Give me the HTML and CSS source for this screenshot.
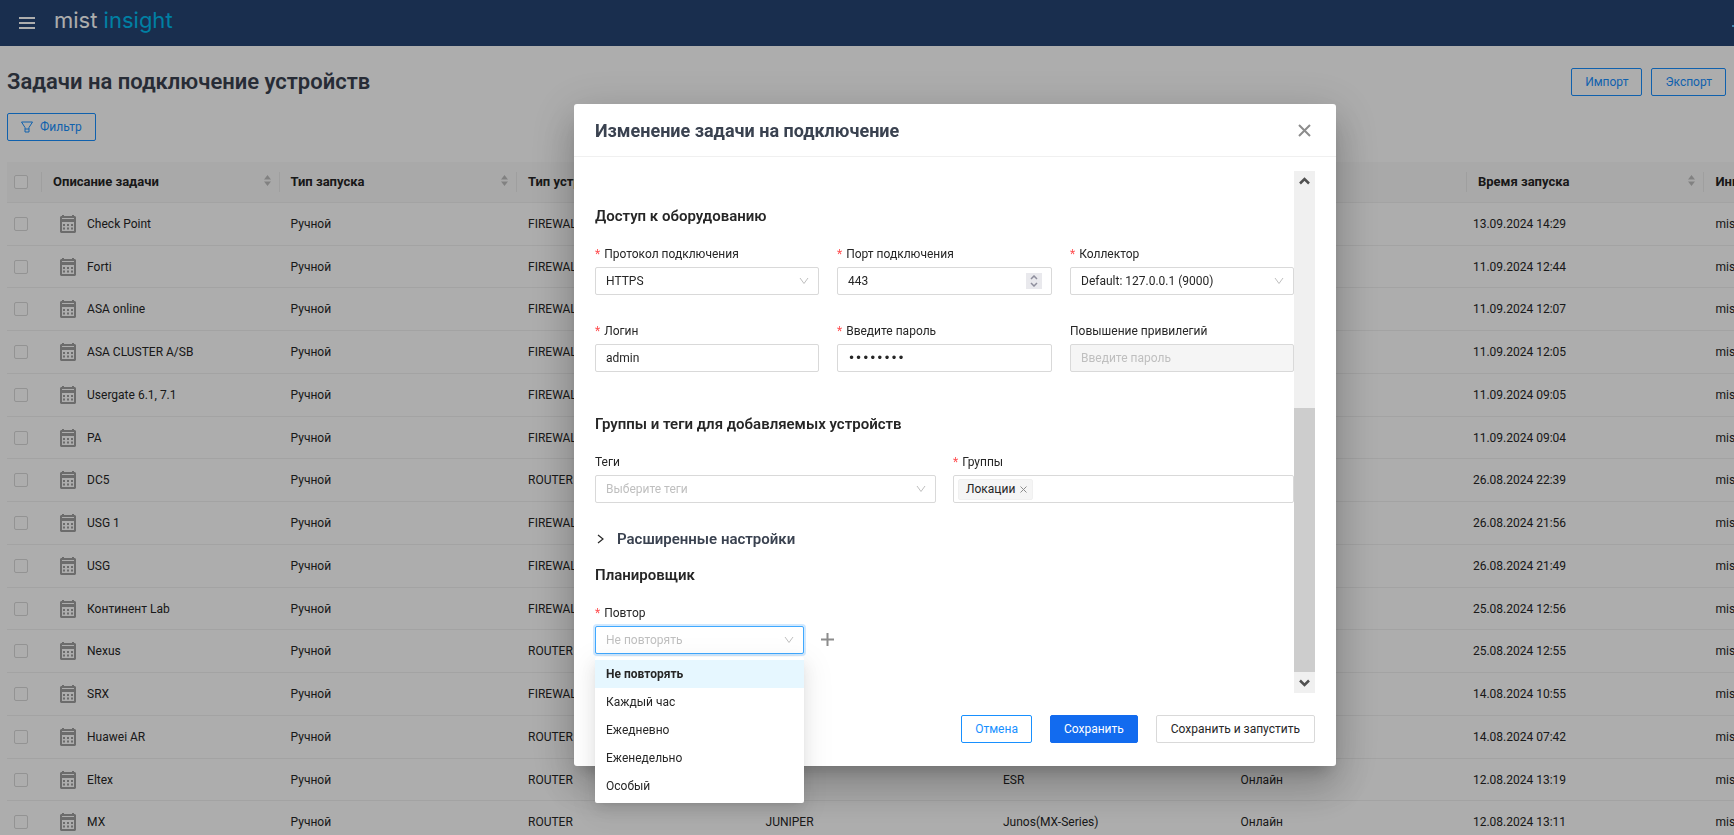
FILE: index.html
```html
<!DOCTYPE html>
<html lang="ru">
<head>
<meta charset="utf-8">
<title>Задачи на подключение устройств</title>
<link rel="stylesheet" href="styles.css">
</head>
<body>
<svg class="sprite" aria-hidden="true">
  <symbol id="calendar" viewBox="0 0 16 18">
    <path fill="currentColor" fill-rule="evenodd" d="M2 0h2v1h8V0h2v1h1l1 1v15l-1 1H1l-1-1V2l1-1h1zM2 3v1h12V3zM2 7v9h12V7z"/>
    <path fill="currentColor" d="M3 9h2v2H3zM7 9h2v2H7zM11 9h2v2h-2zM3 12.500h2v2H3zM7 12.500h2v2H7zM11 12.500h2v2h-2z"/>
  </symbol>
  <symbol id="chevron" viewBox="0 0 10 8"><path d="M1 1l4 5.500L9 1" fill="none" stroke="currentColor"/></symbol>
</svg>

<header class="topbar">
  <button class="burger" aria-label="Меню"><svg width="18" height="12"><path d="M1 1h16M1 6h16M1 11h16" stroke="#fff" stroke-width="2"/></svg></button>
  <a class="logo" href="#">mist <span>insight</span></a>
  <span class="topbar-mark"></span>
</header>

<main class="page">
  <div class="page-head">
    <h1>Задачи на подключение устройств</h1>
    <button class="btn btn-outline">Импорт</button>
    <button class="btn btn-outline">Экспорт</button>
  </div>
  <button class="btn btn-outline filter"><svg width="12" height="12" viewBox="0 0 12 12"><path d="M.5 1h11L8 6.500v4.500H4V6.500zM4 8h4" fill="none" stroke="currentColor"/></svg>Фильтр</button>
  <div class="table-wrap">
    <table>
      <colgroup><col class="c-check"><col class="c-main"><col class="c-main"><col class="c-main"><col class="c-main"><col class="c-main"><col class="c-main"><col class="c-main"><col class="c-main"></colgroup>
      <thead><tr>
        <th><input type="checkbox" aria-label="Выбрать все"></th>
        <th>Описание задачи</th><th>Тип запуска</th><th>Тип устройства</th><th></th><th></th><th></th><th>Время запуска</th><th>Инициатор</th>
      </tr></thead>
      <tbody id="rows"></tbody>
    </table>
  </div>
</main>

<div class="mask">
  <form class="modal" role="dialog" aria-labelledby="dlg-title">
    <div class="modal-head">
      <h2 id="dlg-title">Изменение задачи на подключение</h2>
      <button type="button" class="close" aria-label="Закрыть"><svg width="13" height="13"><path d="M1 1l11 11M12 1L1 12" stroke="currentColor" stroke-width="2"/></svg></button>
    </div>
    <div class="modal-body">
      <div class="content">
        <h3>Доступ к оборудованию</h3>
        <div class="grid three">
          <div class="field"><label class="req" for="proto">Протокол подключения</label>
            <div class="control"><select id="proto"><option>HTTPS</option></select><svg class="arrow"><use href="#chevron"/></svg></div></div>
          <div class="field"><label class="req" for="port">Порт подключения</label>
            <div class="control"><input id="port" type="text" inputmode="numeric" value="443"><span class="spinner"><svg width="8" height="12"><path d="M1 4l3-3 3 3M1 8l3 3 3-3" fill="none" stroke="#8f8f9d" stroke-width="1.500"/></svg></span></div></div>
          <div class="field"><label class="req" for="coll">Коллектор</label>
            <div class="control"><select id="coll"><option>Default: 127.0.0.1 (9000)</option></select><svg class="arrow"><use href="#chevron"/></svg></div></div>
          <div class="field"><label class="req" for="login">Логин</label>
            <div class="control"><input id="login" type="text" value="admin"></div></div>
          <div class="field"><label class="req" for="pass">Введите пароль</label>
            <div class="control"><input id="pass" class="secret" type="password" value="password"></div></div>
          <div class="field"><label for="priv">Повышение привилегий</label>
            <div class="control"><input id="priv" type="password" placeholder="Введите пароль" disabled></div></div>
        </div>
        <h3 class="groups-title">Группы и теги для добавляемых устройств</h3>
        <div class="grid two">
          <div class="field"><label for="tags">Теги</label>
            <div class="control"><select id="tags" class="muted"><option>Выберите теги</option></select><svg class="arrow"><use href="#chevron"/></svg></div></div>
          <div class="field"><label class="req" for="groups">Группы</label>
            <div class="control tagbox"><span class="tag">Локации<button type="button" aria-label="Удалить"><svg width="7" height="7"><path d="M.5.5l6 6M6.500.5l-6 6" stroke="currentColor"/></svg></button></span><input id="groups" type="text"></div></div>
        </div>
        <button type="button" class="expander"><svg width="7" height="10"><path d="M1 1l5 4-5 4" fill="none" stroke="#262626" stroke-width="1.200"/></svg>Расширенные настройки</button>
        <h3 class="plan-title">Планировщик</h3>
        <div class="repeat-row">
          <div class="field repeat"><label class="req" for="repeat">Повтор</label>
            <div class="control"><select id="repeat" class="muted focused"><option>Не повторять</option></select><svg class="arrow"><use href="#chevron"/></svg>
              <ul class="menu" role="listbox"><li class="active" role="option">Не повторять</li><li role="option">Каждый час</li><li role="option">Ежедневно</li><li role="option">Еженедельно</li><li role="option">Особый</li></ul>
            </div></div>
          <button type="button" class="add" aria-label="Добавить"><svg width="13" height="13"><path d="M0 6.500h13M6.500 0v13" stroke="currentColor" stroke-width="2"/></svg></button>
        </div>
      </div>
      <div class="scrollbar" aria-hidden="true">
        <svg class="sb-btn" viewBox="0 0 21 21"><path d="M6 12.500L10.500 8l4.500 4.500" fill="none" stroke="#505050" stroke-width="2.500"/></svg>
        <div class="track"><div class="thumb"></div></div>
        <svg class="sb-btn" viewBox="0 0 21 21"><path d="M6 8.500l4.500 4.500L15 8.500" fill="none" stroke="#505050" stroke-width="2.500"/></svg>
      </div>
    </div>
    <div class="modal-foot">
      <button type="button" class="btn btn-outline">Отмена</button>
      <button type="button" class="btn btn-primary">Сохранить</button>
      <button type="button" class="btn">Сохранить и запустить</button>
    </div>
  </form>
</div>
<script src="rows.js"></script>
</body>
</html>
```

FILE: styles.css
```css
* { box-sizing: border-box; }
html, body { height: 100%; }
body { margin: 0; overflow: hidden; background: #fff; font: 12px/20px Roboto, "Noto Sans", sans-serif; color: #262626; }
button, input, select { font: inherit; color: inherit; }
button { padding: 0; border: 0; background: none; cursor: pointer; }
h1, h2, h3 { margin: 0; font-weight: 700; }
.sprite { display: none; }

.topbar { display: flex; align-items: center; height: 46px; padding-left: 18px; background: #264474; }
.burger { display: flex; margin-right: 18px; }
.logo { padding-bottom: 6px; font: 22px/28px Inter, sans-serif; color: #fff; text-decoration: none; }
.logo span { color: #00bdf0; }
.topbar-mark { width: 2px; height: 2px; margin: 6px 0 0 auto; background: #5fc3ff; }

.page { padding: 21px 0 0 7px; }
.page-head { display: flex; align-items: center; gap: 9px; padding-right: 8px; }
h1 { flex: 1; padding-top: 1px; font-size: 22px; line-height: 28px; font-weight: 600; color: #3a4250; }
.btn { height: 28px; padding: 0 14px; border: 1px solid #d9d9d9; border-radius: 2px; background: #fff; white-space: nowrap; }
.btn-outline, .btn-primary { padding: 0 13px; }
.btn-outline { border-color: #1890ff; color: #1890ff; }
.btn-primary { border-color: #126bef; background: #126bef; color: #fff; }
.filter { display: flex; align-items: center; gap: 7px; margin-top: 17px; padding: 0 13px; }

.table-wrap { margin-top: 21px; overflow: hidden; }
table { width: 1935px; table-layout: fixed; border-collapse: separate; border-spacing: 0; }
.c-check { width: 35px; }
.c-main { width: 237px; }
th, td { padding: 0 11px; border-bottom: 1px solid #f0f0f0; text-align: left; white-space: nowrap; }
th { height: 41px; background: #fafafa; font-size: 13px; font-weight: 700; }
td { height: 43px; }
tr:nth-child(4n+2) td { height: 42px; }
th:first-child, td:first-child { padding: 0 7px; }
td:nth-child(2) { padding-left: 18px; }
td:nth-child(8) { padding-left: 6px; }
.th-in { display: flex; align-items: center; justify-content: space-between; }
.th-in::before { content: ""; width: 1px; height: 20px; margin: 0 11px 0 -12px; background: #ebebeb; }
.th-in span { flex: 1; }
.sort { margin: 0 -2px 4px 0; }
.name { display: flex; align-items: center; gap: 11px; }
.cal { width: 16px; height: 18px; color: #a0a0a0; }
input[type=checkbox] { display: block; appearance: none; width: 14px; height: 14px; margin: 0; border: 1px solid #d9d9d9; border-radius: 2px; background: #fff; }

.mask { position: fixed; inset: 0; display: flex; align-items: flex-start; justify-content: center; padding: 104px 0 0 176px; background: rgba(0, 0, 0, .32); }
.modal { width: 762px; border-radius: 3px; background: #fff; box-shadow: 0 11px 15px -7px rgba(0,0,0,.2), 0 24px 38px 3px rgba(0,0,0,.14), 0 9px 46px 8px rgba(0,0,0,.12); }
.modal-head { display: flex; align-items: center; justify-content: space-between; height: 53px; padding: 0 25px 0 21px; border-bottom: 1px solid #f0f0f0; }
h2 { padding-top: 1px; font-size: 18px; line-height: 24px; color: #3a4250; }
.close, .add { display: flex; color: #8c8c8c; }
.modal-body { display: flex; height: 522px; margin: 14px 21px 0; }
.content { flex: 1; padding-top: 34px; }
h3 { font-size: 15px; line-height: 22px; font-weight: 600; }
.grid { display: grid; column-gap: 18px; row-gap: 25px; margin-top: 16px; }
.three { grid-template-columns: 224fr 215fr 224fr; }
.two { grid-template-columns: 1fr 1fr; column-gap: 17px; }
.field { display: flex; flex-direction: column; min-width: 0; }
label { height: 24px; line-height: 22px; }
.req::before { content: "*"; margin-right: 4px; color: #ff4d4f; }
.control { position: relative; display: flex; height: 28px; }
.control > select, .control > input { width: 100%; padding: 0 10px; border: 1px solid #d9d9d9; border-radius: 2px; outline: 0; background: #fff; appearance: none; }
.control > input:disabled { background: #f5f5f5; }
.control > .secret { font-family: "DejaVu Sans", sans-serif; }
.control > .muted, input::placeholder { color: #bfbfbf; }
.control > .focused { border-color: #40a9ff; box-shadow: 0 0 0 2px rgba(24, 144, 255, .2); }
.arrow { position: absolute; right: 10px; top: 10px; width: 10px; height: 8px; color: #bfbfbf; pointer-events: none; }
.spinner { position: absolute; right: 10px; top: 6px; display: flex; align-items: center; justify-content: center; width: 16px; height: 16px; background: #e9e9ed; }
.control.tagbox { align-items: center; padding: 0 4px; border: 1px solid #d9d9d9; border-radius: 2px; }
.tagbox > input { flex: 1; width: auto; height: 24px; border: 0; }
.tag { display: flex; align-items: center; gap: 5px; height: 21px; padding: 0 5px 0 7px; border: 1px solid #f0f0f0; border-radius: 2px; background: #f5f5f5; }
.tag button { display: flex; color: #8c8c8c; }
.groups-title { margin-top: 41px; }
.expander { display: flex; align-items: center; gap: 13px; margin-top: 25px; padding-left: 2px; font-size: 15px; line-height: 22px; font-weight: 600; color: #3a4250; }
.plan-title { margin-top: 14px; }
.repeat-row { display: flex; align-items: flex-end; gap: 17px; margin-top: 16px; }
.repeat { width: 209px; }
.add { padding-bottom: 8px; }
.menu { position: absolute; top: 31px; left: 0; right: 0; z-index: 1; margin: 0; padding: 3px 0; list-style: none; border-radius: 2px; background: #fff; box-shadow: 0 3px 6px -4px rgba(0,0,0,.12), 0 6px 16px rgba(0,0,0,.08), 0 9px 28px 8px rgba(0,0,0,.05); }
.menu li { padding: 4px 11px; }
.menu .active { background: #e6f7ff; font-weight: 700; }
.scrollbar { display: flex; flex-direction: column; width: 21px; background: #f0f0f0; }
.sb-btn { width: 21px; height: 21px; }
.track { display: flex; flex: 1; align-items: flex-end; }
.thumb { width: 100%; height: 55%; background: #cdcdcd; }
.modal-foot { display: flex; justify-content: flex-end; gap: 18px; padding: 22px 21px 23px; }
```

FILE: rows.js
```js
const tasks = [
  ["Check Point", "FIREWALL", "", "", "", "13.09.2024 14:29"],
  ["Forti", "FIREWALL", "", "", "", "11.09.2024 12:44"],
  ["ASA online", "FIREWALL", "", "", "", "11.09.2024 12:07"],
  ["ASA CLUSTER A/SB", "FIREWALL", "", "", "", "11.09.2024 12:05"],
  ["Usergate 6.1, 7.1", "FIREWALL", "", "", "", "11.09.2024 09:05"],
  ["PA", "FIREWALL", "", "", "", "11.09.2024 09:04"],
  ["DC5", "ROUTER", "", "", "", "26.08.2024 22:39"],
  ["USG 1", "FIREWALL", "", "", "", "26.08.2024 21:56"],
  ["USG", "FIREWALL", "", "", "", "26.08.2024 21:49"],
  ["Континент Lab", "FIREWALL", "", "", "", "25.08.2024 12:56"],
  ["Nexus", "ROUTER", "", "", "", "25.08.2024 12:55"],
  ["SRX", "FIREWALL", "", "", "", "14.08.2024 10:55"],
  ["Huawei AR", "ROUTER", "", "", "", "14.08.2024 07:42"],
  ["Eltex", "ROUTER", "", "ESR", "Онлайн", "12.08.2024 13:19"],
  ["MX", "ROUTER", "JUNIPER", "Junos(MX-Series)", "Онлайн", "12.08.2024 13:11"]
];
document.getElementById("rows").innerHTML = tasks.map(([name, type, vendor, model, state, time]) =>
  `<tr><td><input type="checkbox" aria-label="${name}"></td>
  <td><div class="name"><svg class="cal"><use href="#calendar"/></svg>${name}</div></td>
  <td>Ручной</td><td>${type}</td><td>${vendor}</td><td>${model}</td><td>${state}</td><td>${time}</td><td>mist</td></tr>`).join("");
document.querySelectorAll("th:not(:first-child)").forEach(th => {
  const sort = th.textContent ? `<svg class="sort" width="7" height="11"><path d="M0 4.500L3.500 0 7 4.500zM0 6.500h7L3.500 11z" fill="#bfbfbf"/></svg>` : "";
  th.innerHTML = `<div class="th-in"><span>${th.textContent}</span>${sort}</div>`;
});
```
